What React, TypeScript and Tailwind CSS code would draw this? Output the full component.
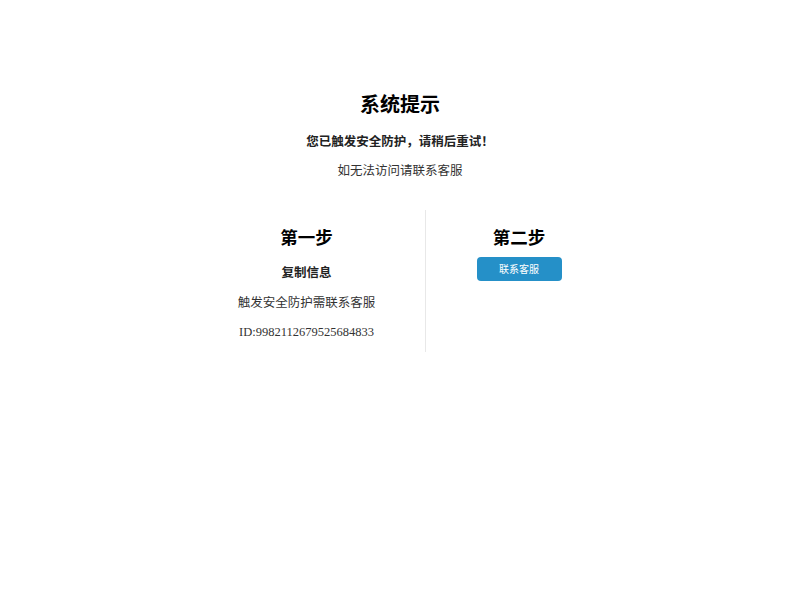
import React from "react";

export default function App() {
  const cjk = { fontFamily: '"Noto Sans CJK SC", "Liberation Serif", serif' };
  const serif = { fontFamily: '"Liberation Serif", "Noto Sans CJK SC", serif' };
  return (
    <div className="w-[800px] h-[600px] bg-white flex flex-col items-center" style={cjk}>
      <h1 className="mt-[90px] text-[20px] leading-[28px] font-bold text-black">系统提示</h1>
      <p className="mt-[14px] text-[12.5px] leading-[18px] font-bold text-[#222]">您已触发安全防护，请稍后重试！</p>
      <p className="mt-[11px] text-[12.5px] leading-[18px] text-[#333]">如无法访问请联系客服</p>
      <div className="mt-[31px] flex">
        <div className="w-[238px] border-r border-[#e8e8e8] flex flex-col items-center pt-[15px] pb-[11px]">
          <h2 className="text-[17.5px] leading-[24px] font-bold text-black">第一步</h2>
          <p className="mt-[14px] text-[12.5px] leading-[18px] font-bold text-[#222]">复制信息</p>
          <p className="mt-[12px] text-[12.5px] leading-[18px] text-[#333]">触发安全防护需联系客服</p>
          <p className="mt-[12px] text-[12.5px] leading-[18px] text-[#333]" style={serif}>ID:9982112679525684833</p>
        </div>
        <div className="w-[186px] flex flex-col items-center pt-[15px]">
          <h2 className="text-[17.5px] leading-[24px] font-bold text-black">第二步</h2>
          <button className="mt-[8px] w-[85px] h-[24px] rounded-[4px] bg-[#2590c8] text-white text-[10px] leading-[24px]">联系客服</button>
        </div>
      </div>
    </div>
  );
}
